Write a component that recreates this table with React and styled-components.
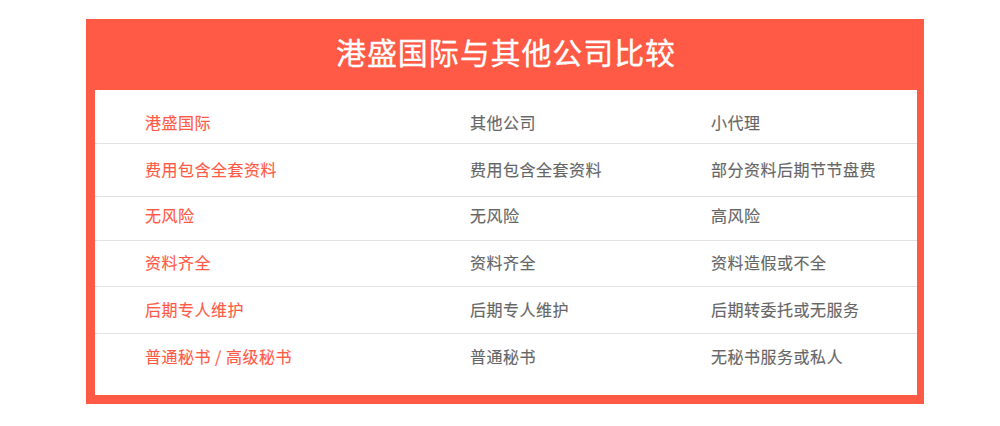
import React from "react";
import styled, { createGlobalStyle } from "styled-components";

const Global = createGlobalStyle`
  html, body { margin: 0; padding: 0; background: #fff; }
  body { font-family: "Noto Sans CJK SC", "Noto Sans", sans-serif; }
`;

const Page = styled.div`
  padding: 19px 0 0 86px;
  width: 1000px;
  height: 426px;
  box-sizing: border-box;
`;

const Card = styled.section`
  width: 838px;
  background: #ff5a45;
  padding: 0 7px 9px 9px;
  box-sizing: border-box;
`;

const Title = styled.h1`
  margin: 0;
  height: 71px;
  line-height: 65px;
  padding-bottom: 6px;
  box-sizing: border-box;
  text-align: center;
  color: #fff;
  font-size: 30px;
  font-weight: 400;
  letter-spacing: 0.9px;
  -webkit-text-stroke: 0.3px #fff;
`;

const Table = styled.div`
  background: #fff;
  display: flex;
  flex-direction: column;
`;

const Row = styled.div`
  display: grid;
  grid-template-columns: 325px 241px 1fr;
  padding: ${(p) => p.$pad}px 0 0 50px;
  height: ${(p) => p.$h}px;
  box-sizing: content-box;
  border-bottom: ${(p) => (p.$last ? "none" : "1px solid #e3e3e3")};
`;

const Cell = styled.div`
  font-size: 16px;
  line-height: 20px;
  height: 20px;
  color: ${(p) => (p.$accent ? "#ff5a45" : "#666")};
  -webkit-text-stroke: 0.15px ${(p) => (p.$accent ? "#ff5a45" : "#666")};
  white-space: nowrap;
  letter-spacing: 0.5px;
`;

const rows = [
  { a: "港盛国际", b: "其他公司", c: "小代理", h: 53, pad: 22 },
  { a: "费用包含全套资料", b: "费用包含全套资料", c: "部分资料后期节节盘费", h: 52, pad: 15 },
  { a: "无风险", b: "无风险", c: "高风险", h: 43, pad: 8 },
  { a: "资料齐全", b: "资料齐全", c: "资料造假或不全", h: 45, pad: 11 },
  { a: "后期专人维护", b: "后期专人维护", c: "后期转委托或无服务", h: 46, pad: 12 },
  { a: "普通秘书 / 高级秘书", b: "普通秘书", c: "无秘书服务或私人", h: 61, pad: 12 },
];

export default function App() {
  return (
    <>
      <Global />
      <Page>
        <Card>
          <Title>港盛国际与其他公司比较</Title>
          <Table>
            {rows.map((r, i) => (
              <Row
                key={i}
                $h={r.h - r.pad}
                $pad={r.pad}
                $last={i === rows.length - 1}
              >
                <Cell $accent>{r.a}</Cell>
                <Cell>{r.b}</Cell>
                <Cell>{r.c}</Cell>
              </Row>
            ))}
          </Table>
        </Card>
      </Page>
    </>
  );
}
